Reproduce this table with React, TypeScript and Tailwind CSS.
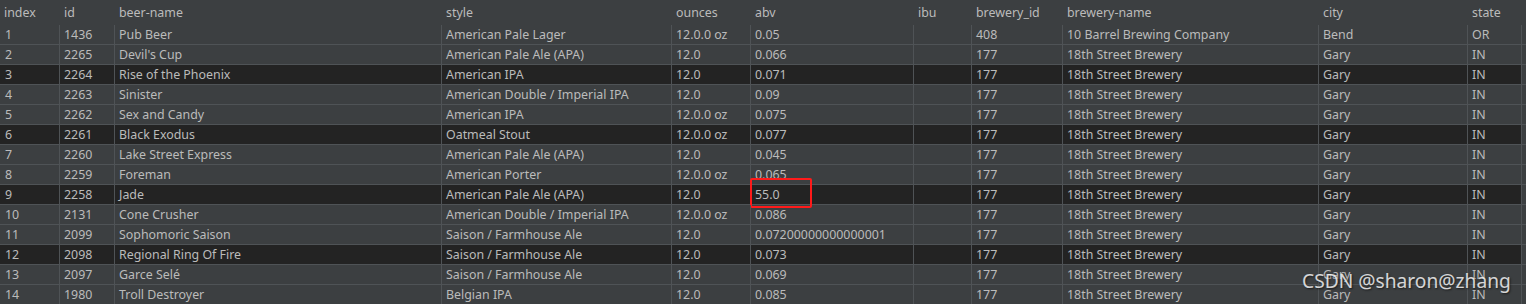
import React from "react";

const cols = [
  { key: "index", w: "w-[60px]" },
  { key: "id", w: "w-[55px]" },
  { key: "beer-name", w: "w-[327px]" },
  { key: "style", w: "w-[230px]" },
  { key: "ounces", w: "w-[79px]" },
  { key: "abv", w: "w-[163px]" },
  { key: "ibu", w: "w-[58px]" },
  { key: "brewery_id", w: "w-[91px]" },
  { key: "brewery-name", w: "w-[256px]" },
  { key: "city", w: "w-[149px]" },
  { key: "state", w: "w-[54px]" },
];

const rows: string[][] = [
  ["1", "1436", "Pub Beer", "American Pale Lager", "12.0.0 oz", "0.05", "", "408", "10 Barrel Brewing Company", "Bend", "OR"],
  ["2", "2265", "Devil's Cup", "American Pale Ale (APA)", "12.0", "0.066", "", "177", "18th Street Brewery", "Gary", "IN"],
  ["3", "2264", "Rise of the Phoenix", "American IPA", "12.0", "0.071", "", "177", "18th Street Brewery", "Gary", "IN"],
  ["4", "2263", "Sinister", "American Double / Imperial IPA", "12.0", "0.09", "", "177", "18th Street Brewery", "Gary", "IN"],
  ["5", "2262", "Sex and Candy", "American IPA", "12.0.0 oz", "0.075", "", "177", "18th Street Brewery", "Gary", "IN"],
  ["6", "2261", "Black Exodus", "Oatmeal Stout", "12.0.0 oz", "0.077", "", "177", "18th Street Brewery", "Gary", "IN"],
  ["7", "2260", "Lake Street Express", "American Pale Ale (APA)", "12.0", "0.045", "", "177", "18th Street Brewery", "Gary", "IN"],
  ["8", "2259", "Foreman", "American Porter", "12.0.0 oz", "0.065", "", "177", "18th Street Brewery", "Gary", "IN"],
  ["9", "2258", "Jade", "American Pale Ale (APA)", "12.0", "55.0", "", "177", "18th Street Brewery", "Gary", "IN"],
  ["10", "2131", "Cone Crusher", "American Double / Imperial IPA", "12.0.0 oz", "0.086", "", "177", "18th Street Brewery", "Gary", "IN"],
  ["11", "2099", "Sophomoric Saison", "Saison / Farmhouse Ale", "12.0", "0.07200000000000001", "", "177", "18th Street Brewery", "Gary", "IN"],
  ["12", "2098", "Regional Ring Of Fire", "Saison / Farmhouse Ale", "12.0", "0.073", "", "177", "18th Street Brewery", "Gary", "IN"],
  ["13", "2097", "Garce Selé", "Saison / Farmhouse Ale", "12.0", "0.069", "", "177", "18th Street Brewery", "Gary", "IN"],
  ["14", "1980", "Troll Destroyer", "Belgian IPA", "12.0", "0.085", "", "177", "18th Street Brewery", "Gary", "IN"],
];

export default function App() {
  return (
    <div
      className="relative w-[1526px] h-[304px] overflow-hidden bg-[#3c3f41] text-[#bbbbbb] text-[12.4px]"
      style={{ fontFamily: '"Noto Sans", "Noto Sans CJK SC", sans-serif' }}
    >
      <div className="flex h-[25px] items-center">
        {cols.map((c) => (
          <div key={c.key} className={`${c.w} shrink-0 pl-[4px] leading-[25px] whitespace-nowrap`}>
            {c.key}
          </div>
        ))}
        <div className="flex-1 self-stretch bg-[#3c3f41]" />
      </div>
      {rows.map((r, i) => {
        const dark = (i + 1) % 3 === 0;
        return (
          <div
            key={i}
            className={`flex h-[20px] border-b border-[#4f5356] ${dark ? "bg-[#232323]" : "bg-[#3c3f41]"}`}
          >
            {r.map((v, j) => (
              <div
                key={j}
                className={`${cols[j].w} shrink-0 border-r border-[#4f5356] pl-[4px] leading-[19px] whitespace-nowrap relative ${j === 0 ? "pl-[5px]" : ""}`}
              >
                {v}
                {i === 8 && j === 5 && (
                  <div className="absolute left-[-1px] top-[-7px] w-[62px] h-[30px] border-2 border-[#ff1a1a] rounded-[2px]" />
                )}
              </div>
            ))}
            <div className="flex-1 bg-[#3c3f41]" />
          </div>
        );
      })}
      <div
        className="absolute left-[1302px] top-[267px] text-[19.2px] text-white/80 whitespace-nowrap"
        style={{ textShadow: "1px 1px 2px rgba(0,0,0,0.6)" }}
      >
        CSDN @sharon@zhang
      </div>
    </div>
  );
}
